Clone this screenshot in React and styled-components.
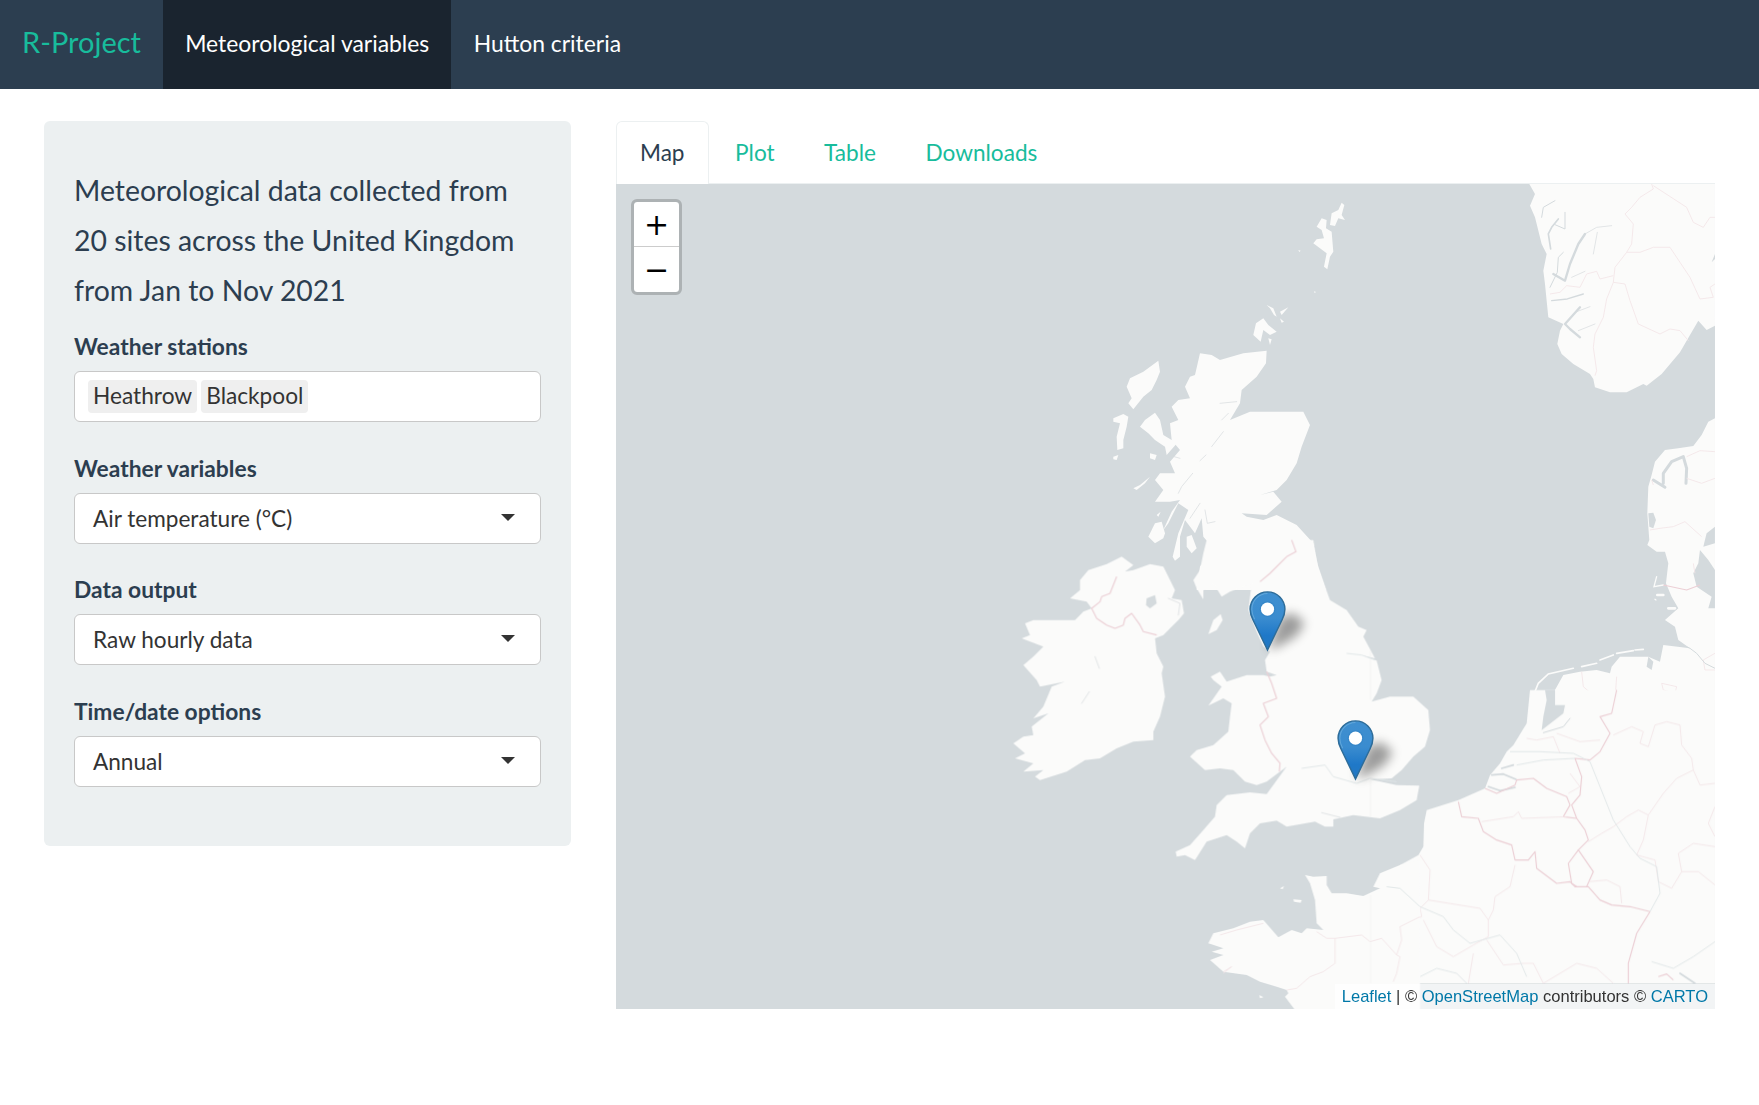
import React from "react";
import styled, { createGlobalStyle } from "styled-components";

const GlobalStyle = createGlobalStyle`
  html, body {
    margin: 0;
    padding: 0;
    background: #fff;
    font-family: Lato, "Open Sans", sans-serif;
    font-size: 22.8px;
    color: #2c3e50;
  }
  * { box-sizing: border-box; }
`;

const Navbar = styled.nav`
  display: flex;
  height: 89px;
  background: #2c3e50;
`;

const Brand = styled.a`
  width: 163px;
  padding-left: 22px;
  font-size: 29px;
  line-height: 84px;
  color: #18bc9c;
`;

const NavLink = styled.a`
  padding: 0 22.2px;
  font-size: 22.9px;
  line-height: 87px;
  color: #fff;
  background: ${(p) => (p.$active ? "#1a242f" : "transparent")};
`;

const Content = styled.div`
  display: flex;
  gap: 45px;
  padding: 32px 44px 0;
`;

const Sidebar = styled.aside`
  flex: none;
  width: 527px;
  height: 725px;
  padding: 44px 30px 0;
  background: #ecf0f1;
  border-radius: 6px;
`;

const Intro = styled.h4`
  margin: 0 0 16px;
  font-size: 28.4px;
  font-weight: 400;
  line-height: 50px;
  color: #2c3e50;
`;

const Field = styled.div`
  margin-bottom: 30.5px;
`;

const Label = styled.label`
  display: block;
  height: 40px;
  font-weight: 700;
  line-height: 30px;
  color: #2c3e50;
`;

const Control = styled.div`
  position: relative;
  display: flex;
  align-items: center;
  gap: 4px;
  width: 467px;
  height: 51px;
  padding: 0 ${(p) => (p.$multi ? "13px" : "18px")};
  background: #fff;
  border: 1px solid #c8c8c8;
  border-radius: 6px;
  font-size: 22.6px;
  color: #333;
  line-height: 29px;
`;

const Caret = styled.span`
  position: absolute;
  right: 25px;
  top: 20px;
  border-style: solid;
  border-width: 7px 7px 0;
  border-color: #333 transparent transparent;
`;

const Chip = styled.span`
  height: 33px;
  padding: 0 5px;
  background: #efefef;
  border-radius: 4px;
  font-size: 22.7px;
  color: #333;
  line-height: 32px;
`;

const Main = styled.main`
  flex: none;
  width: 1099px;
`;

const Tabs = styled.ul`
  display: flex;
  gap: 3.5px;
  height: 63px;
  margin: 0;
  padding: 0;
  list-style: none;
  border-bottom: 1px solid #ecf0f1;
`;

const Tab = styled.li`
  height: ${(p) => (p.$active ? "63px" : "62px")};
  padding: 0 ${(p) => (p.$active ? "23px" : "22px")};
  font-size: 22.6px;
  line-height: 62px;
  color: ${(p) => (p.$active ? "#2c3e50" : "#18bc9c")};
  background: #fff;
  border: 1px solid ${(p) => (p.$active ? "#ecf0f1" : "transparent")};
  border-bottom: 0;
  border-radius: 6px 6px 0 0;
`;

const MapBox = styled.div`
  position: relative;
  height: 825px;
  overflow: hidden;
  background: #d4dadd;
`;

const MapArt = styled.svg`
  display: block;
`;

const Land = styled.path`
  fill: #fbfbfa;
`;

const Water = styled.path`
  fill: #d4dadd;
`;

const Inlet = styled.path`
  fill: none;
  stroke: #d4dadd;
  stroke-width: ${(p) => p.$w || 4}px;
  stroke-linecap: round;
  stroke-linejoin: round;
`;

const Islet = styled.path`
  fill: none;
  stroke: #fbfbfa;
  stroke-width: ${(p) => p.$w || 4}px;
  stroke-linecap: round;
`;

const Border = styled.path`
  fill: none;
  stroke: ${(p) => (p.$strong ? "#eccfd5" : "#f3e6e8")};
  stroke-width: ${(p) => (p.$strong ? 3.4 : 2.6)}px;
  stroke-linejoin: round;
`;

const River = styled.path`
  fill: none;
  stroke: #dfe5e7;
  stroke-width: 2.6px;
`;

const Seam = styled.path`
  fill: none;
  stroke: #eeeeec;
  stroke-width: 1px;
`;

const Zoom = styled.div`
  position: absolute;
  left: 15px;
  top: 15px;
  width: 51px;
  height: 96px;
  background: #fff;
  border: 3px solid #adb2b4;
  border-radius: 6px;
  background-clip: padding-box;
`;

const ZoomButton = styled.div`
  height: 45px;
  border-bottom: ${(p) => (p.$first ? "1px solid #ccc" : "0")};
  font-family: "DejaVu Sans", sans-serif;
  font-weight: 400;
  font-size: 30px;
  line-height: 45px;
  text-align: center;
  color: #000;
`;

const Pin = styled.svg`
  position: absolute;
  left: ${(p) => p.$x}px;
  top: ${(p) => p.$y}px;
  overflow: visible;
`;

const Attribution = styled.div`
  position: absolute;
  right: 0;
  bottom: 0;
  height: 25px;
  padding: 0 7px;
  background: rgba(255, 255, 255, 0.7);
  font-family: "Liberation Sans", Arial, sans-serif;
  font-size: 16.55px;
  line-height: 25px;
  color: #333;
`;

const AttrLink = styled.a`
  color: #0078a8;
`;

// everything inside a Crop is written in the 3x coordinates of that zoomed crop
const Crop = ({ x, y, children }) => (
  <g transform={`translate(${x} ${y}) scale(0.3333)`}>{children}</g>
);

function MapTiles() {
  return (
    <MapArt width="1099" height="825" viewBox="616 184 1099 825">
      <defs>
        <filter id="soft" x="-2%" y="-2%" width="104%" height="104%">
          <feGaussianBlur stdDeviation="0.45" />
        </filter>
      </defs>
      <g filter="url(#soft)">
        {/* Scotland and islands */}
        <Crop x={1100} y={190}>
          <Land d="M300,490 L335,495 L360,510 L430,490 L500,482 L498,520 L470,560 L425,600 L420,640 L390,690 L450,665 L610,665 L630,705 L605,770 L590,820 L560,870 L530,900 L480,915 L520,905 L545,935 L500,975 L425,970 L440,980 L490,990 L530,975 L590,1005 L640,1060 L655,1130 L678,1200 L290,1200 L300,1130 L340,1075 L310,1040 L305,985 L285,1030 L255,990 L240,1040 L240,1100 L225,1112 L218,1100 L235,1030 L265,960 L235,940 L205,1000 L190,1020 L215,965 L240,930 L210,935 L165,935 L190,900 L165,870 L180,850 L225,850 L210,815 L240,780 L215,750 L210,700 L235,690 L215,650 L235,630 L270,625 L255,590 L270,560 L285,555 Z" />
          <Inlet $w={2} d="M370,725 L335,770 M318,795 L300,812 M215,798 L240,805 M278,850 L245,890 L235,910 M300,940 L270,985 M315,960 L322,1000 L345,995 M360,640 L410,635 M365,690 L385,670" />
          <Land d="M175,512 L180,545 L170,570 L155,600 L130,620 L100,658 L85,640 L95,625 L80,590 L90,565 L130,545 Z" />
          <Land d="M40,685 L70,672 L85,680 L80,710 L70,750 L70,775 L52,780 L50,740 L60,700 L40,695 Z" />
          <Land d="M40,800 L55,795 L50,810 L40,808 Z" />
          <Land d="M120,710 L135,690 L165,668 L180,690 L190,735 L215,750 L235,755 L200,795 L195,770 L165,750 L145,730 Z" />
          <Land d="M145,1040 L165,1000 L185,995 L195,1030 L190,1045 L165,1060 Z" />
          <Land d="M260,1040 L275,1035 L290,1075 L275,1090 L260,1070 Z" />
          <Land d="M100,895 L120,885 L150,860 L135,880 L110,900 Z" />
          <Land d="M150,790 L170,795 L165,810 L150,805 Z" />
          <Land d="M170,975 L182,965 L175,980 Z" />
          <Land d="M468,400 L490,385 L505,405 L530,425 L510,435 L490,420 L482,455 L460,435 Z" />
          <Land d="M500,345 L520,355 L530,380 L522,375 L510,355 Z" />
          <Land d="M540,365 L565,352 L545,375 Z" />
          <Land d="M540,385 L552,395 L545,398 Z" />
          <Land d="M505,445 L515,448 L510,465 Z" />
          <Land d="M725,38 L733,45 L725,75 L735,90 L715,85 L705,108 L690,105 L695,70 L715,60 Z" />
          <Land d="M665,85 L680,90 L678,115 L695,125 L700,185 L690,200 L682,238 L672,230 L680,190 L660,175 L640,160 L650,148 L672,145 L665,120 L650,110 Z" />
          <Land d="M595,180 L602,182 L598,186 Z" />
          <Land d="M642,304 L648,306 L644,309 Z" />
        </Crop>

        {/* England, Wales, Ireland */}
        <Crop x={1000} y={540}>
          <Land d="M620,0 L940,0 L950,70 L990,180 L1040,210 L1075,260 L1100,270 L1090,290 L1125,355 L1085,345 L1130,362 L1145,420 L1130,460 L1115,485 L1170,470 L1240,470 L1285,510 L1290,570 L1275,620 L1240,650 L1205,690 L1175,715 L1110,718 L1190,735 L1258,737 L1250,780 L1200,810 L1140,835 L1060,825 L1000,838 L1000,860 L975,860 L945,845 L860,860 L830,842 L780,850 L750,880 L735,925 L710,905 L680,885 L620,905 L585,960 L555,945 L530,950 L527,935 L570,915 L610,870 L645,830 L650,795 L680,765 L750,757 L800,762 L860,680 L800,725 L770,735 L735,725 L700,690 L660,685 L615,690 L570,650 L590,630 L640,615 L685,575 L690,530 L695,490 L670,475 L625,497 L665,440 L640,420 L632,410 L660,395 L680,425 L740,405 L790,405 L810,410 L830,405 L800,395 L795,360 L810,335 L790,320 L770,275 L745,210 L755,130 L690,155 L665,170 L640,130 L610,150 L610,178 L590,145 L580,120 L600,90 L610,40 Z" />
          <Inlet $w={2} d="M965,818 L1020,832" />
          <Land d="M625,282 L640,240 L662,222 L668,240 L650,270 Z" />
          <Land d="M240,120 L265,90 L320,72 L365,50 L400,75 L375,95 L400,90 L450,72 L490,80 L525,150 L515,175 L545,180 L552,220 L535,240 L510,265 L490,285 L465,295 L470,340 L490,380 L485,400 L495,470 L480,530 L460,575 L460,600 L400,605 L350,625 L300,655 L255,660 L200,695 L120,720 L105,710 L130,690 L70,695 L100,670 L45,655 L75,640 L40,610 L70,590 L100,585 L95,560 L145,520 L100,535 L130,500 L155,440 L195,425 L120,440 L110,420 L70,375 L100,350 L130,320 L65,295 L90,285 L75,250 L100,240 L225,240 L250,215 L275,205 L260,185 L210,175 L240,150 Z" />
          <Water d="M440,175 L465,165 L470,190 L450,205 L438,195 Z" />
          <Inlet $w={2} d="M285,350 L298,385 M268,455 L245,490 M505,175 L540,190 L535,225" />
          <Border $strong d="M350,110 L330,160 L305,170 L300,185 L275,205 L290,235 L320,255 L345,265 L370,255 L375,235 L395,220 L420,255 L430,275 L470,285" />
          <Border $strong d="M875,0 L888,35 L860,50 L810,100 L780,125" />
          <Border $strong d="M800,395 L815,430 L830,475 L790,490 L805,530 L780,555 L795,600 L815,640 L840,670 L838,695" />
          <River d="M905,685 L975,675 L1000,710 L1070,730 L1110,715 L1190,725 M1040,340 L1085,345 L1125,360" />
          <Seam d="M1112,330 L1112,480 M1112,720 L1112,830" strokeWidth="3" />
        </Crop>

        {/* Norway */}
        <Crop x={1480} y={184}>
          <Land d="M148,0 L705,0 L705,210 L695,235 L705,225 L705,425 L680,438 L655,410 L620,470 L600,505 L545,570 L500,605 L490,600 L440,625 L390,625 L345,610 L340,585 L330,570 L280,540 L245,510 L232,480 L240,440 L250,420 L205,400 L200,350 L195,300 L190,260 L200,210 L185,180 L165,100 L150,65 L165,30 Z" />
          <Inlet $w={7} d="M315,150 L295,180 L270,240 L255,290 L220,270" />
          <Inlet $w={2} d="M395,125 L350,130 L315,150 M340,210 L352,145 M315,262 L275,280" />
          <Inlet $w={5} d="M235,105 L215,130 L205,150 L212,195" />
          <Inlet $w={3} d="M225,50 L190,70 L185,100 M255,85 L255,135 L225,122 M250,205 L235,220 L232,265 L210,310" />
          <Inlet $w={4} d="M310,330 L262,345 L215,350" />
          <Inlet $w={7} d="M300,370 L255,420 L270,435 L300,460" />
          <Inlet $w={2} d="M345,420 L295,440 M330,368 L285,385" />
          <Border d="M515,0 L520,15 L480,40 L455,70 L435,90 L460,120 L455,180 L440,205 L405,250 L400,295 L380,345 L370,400 L345,450 L340,490 L350,560 L345,575" />
          <Border d="M400,295 L435,300 L450,350 L475,420 L540,450 L570,435 L600,440 L625,470 M440,205 L480,205 L520,190 L570,190 L600,235 L630,280 L660,345 L700,340 L690,310 L705,300 M520,5 L620,70 L640,115 L670,130 L690,100 L705,100 M400,275 L360,285 L350,262 L320,270 L300,310 L260,305 L240,325 L210,330" />
        </Crop>

        {/* Denmark, north Germany */}
        <Crop x={1400} y={400}>
          <Land d="M945,55 L925,65 L905,105 L880,138 L835,145 L795,150 L765,185 L755,225 L745,260 L742,340 L748,420 L742,435 L770,455 L795,455 L805,490 L798,550 L815,590 L835,625 L795,660 L825,680 L835,720 L870,745 L790,735 L780,785 L745,770 L660,770 L635,800 L630,820 L590,810 L540,815 L490,825 L465,870 L465,900 L945,900 Z" />
          <Inlet $w={9} d="M760,240 L795,262 M790,250 L790,220 L815,185 L850,170 L860,205 L858,250" />
          <Water d="M745,340 L760,338 L768,360 L760,385 L748,380 Z" />
          <Water d="M945,380 L920,400 L910,440 L945,430 Z" />
          <Water d="M900,450 L925,480 L945,510 L945,625 L925,625 L935,590 L890,560 L880,520 L895,490 Z" />
          <Water d="M745,770 L760,785 L755,810 L740,800 Z" />
          <Islet $w={4} d="M770,530 L762,560 L790,555 M765,598 L768,600" />
          <Islet $w={8} d="M772,585 L790,585 M805,625 L825,625" />
          <Islet $w={5} d="M403,880 L415,850 L445,822 L520,805 M545,800 L590,790 M600,780 L640,765 M650,760 L700,752 M705,750 L730,748" />
          <Border $strong d="M790,555 L860,570 L900,555" />
          <Border d="M860,170 L900,152 L945,155 M750,390 L780,385 L820,380 L855,365 L905,410 M755,240 L760,255 M860,235 L905,250 L945,235 M545,815 L550,860 L590,895 M650,830 L645,900 M785,850 L830,860 L825,880 L790,870 Z M945,760 L910,780 L915,810 L945,810 M880,490 L885,520" />
          <Inlet $w={3} d="M835,730 L870,745 L890,760 L915,790 L945,805" />
        </Crop>

        {/* Low countries, France, Germany */}
        <Crop x={1400} y={690}>
          <Land d="M390,0 L945,0 L945,880 L0,880 L0,525 L55,495 L70,470 L72,400 L80,360 L175,330 L255,295 L270,255 L300,220 L320,185 L340,165 L380,100 Z" />
          <Water d="M465,0 L435,0 L440,30 L430,80 L425,120 L490,70 L495,45 L465,45 Z" />
          <Inlet $w={5} d="M348,268 L310,252 L275,255 M345,292 L300,302 L265,290 M340,225 L305,235" />
          <Inlet $w={3} d="M430,128 L490,110 L510,85" />
          <Border $strong d="M175,335 L185,380 L235,385 L250,425 L290,450 L335,465 L345,510 L385,510 L405,485 L410,535 L470,580 L510,575 L525,590 L565,590 L600,630 L635,645 L690,650 L750,665" />
          <Border $strong d="M255,295 L290,310 L345,285 L350,270 L400,265 L440,295 L500,320 L510,345 L490,380 L530,385 L555,420 L565,450 L535,480 L580,545 L560,590" />
          <Border $strong d="M650,0 L635,70 L600,80 L630,130 L600,185 L570,210 L525,205 L545,260 L540,315 L515,345 L530,385" />
          <Border $strong d="M535,480 L505,520 L515,580 L530,590 M750,665 L710,730 L685,820 L685,880 M775,860 L800,852 L820,870" />
          <Border d="M640,135 L695,110 L730,125 L720,160 L745,170 L765,105 L800,95 L840,105 L845,165 L875,205 L880,240 L900,285 L945,280 M880,240 L830,265 L790,310 L745,375 L715,360 L680,380 L640,410 L605,430 L565,455 M745,375 L730,450 L710,495 L765,510 L775,575 L815,595 L845,545 L895,545 L945,585 M835,490 L845,545 M835,490 L880,460 L945,470 M565,575 L620,570 L660,590 L665,640 M245,395 L340,380 L355,365 L365,385 L500,380 M60,495 L90,540 L85,630 L60,655 L65,680 L0,710 M85,630 L240,655 L265,690 L265,740 L220,765 L160,800 L110,770 L70,690 M345,525 L330,590 L285,620 L280,660 L265,690 M260,750 L310,825 L370,820 L400,820 L430,880 M430,880 L530,820 L590,835 L640,880 M220,790 L205,880 M380,145 L410,150 L460,140 L480,190 M470,130 L540,155 L600,150 M510,250 L540,290 L505,310 M945,350 L925,400 L945,440" />
          <River d="M330,185 L420,185 L520,190 L570,215 L600,290 L640,390 L690,470 L720,505 L770,530 L780,610 L750,665 M350,225 L430,210 L525,205 M0,600 L60,650 L130,680 L160,720 L210,760 L300,735 L350,790 L380,860 M755,815 L820,835 L880,800 L945,755 M60,860 L110,835 L170,850 L200,880" />
          <Inlet $w={5} d="M840,850 L885,880" />
        </Crop>

        {/* Normandy, Brittany */}
        <Crop x={1180} y={860}>
          <Land d="M720,0 L660,15 L600,40 L580,80 L600,85 L550,108 L500,100 L455,100 L440,75 L440,48 L400,50 L375,45 L390,70 L405,120 L410,190 L430,210 L380,205 L365,220 L335,210 L295,232 L250,180 L210,185 L160,205 L100,220 L85,250 L130,265 L95,275 L130,285 L90,300 L130,335 L200,345 L240,365 L290,380 L320,390 L325,400 L315,410 L345,450 L720,450 Z" />
          <Land d="M340,118 L365,120 L362,128 L342,125 Z" />
          <Land d="M300,85 L312,78 L308,88 Z" />
          <Land d="M238,405 L250,412 L240,415 Z" />
          <Border d="M410,215 L440,235 L465,235 L465,310 L430,335 L390,350 L350,385 L320,390 M465,235 L545,225 L570,245 L605,235 L650,285 L660,290 L650,340 L640,365 M720,170 L660,200 L665,240 L650,285 M120,225 L170,210 L250,190 M130,335 L155,320 L130,340" />
          <River d="M620,80 L660,85 L720,140" />
          <Seam d="M572,105 L572,370" strokeWidth="3" />
        </Crop>
      </g>
    </MapArt>
  );
}

function MapPin({ x, y, id }) {
  return (
    <Pin $x={x} $y={y} width="37" height="60" viewBox="0 0 25 41">
      <defs>
        <linearGradient id={`pin${id}`} x1="0" y1="0" x2="0" y2="1">
          <stop offset="0" stopColor="#3f8fd0" />
          <stop offset="0.45" stopColor="#3a8ccf" />
          <stop offset="0.75" stopColor="#1f78c8" />
          <stop offset="1" stopColor="#2278c2" />
        </linearGradient>
        <filter id={`pinShadow${id}`} x="-100%" y="-100%" width="300%" height="300%">
          <feGaussianBlur stdDeviation="3.6" />
        </filter>
      </defs>
      <path
        d="M13,40 L20,38 L32,31 L38,22 L30,15 L21,18 Z"
        fill="#000"
        opacity="0.38"
        filter={`url(#pinShadow${id})`}
      />
      <path
        d="M12.5,.6 C5.9,.6 .6,5.9 .6,12.5 C.6,14.9 1.4,17.4 2.6,19.8 L12.5,40.4 L22.4,19.8 C23.6,17.4 24.4,14.9 24.4,12.5 C24.4,5.9 19.1,.6 12.5,.6 Z"
        fill={`url(#pin${id})`}
        stroke="#2d6c99"
        strokeWidth="1"
      />
      <path
        d="M12.5,1.7 C6.6,1.7 1.8,6.6 1.8,12.5 C1.8,14.6 2.5,17 3.7,19.3"
        fill="none"
        stroke="#6fb0de"
        strokeWidth="0.7"
        opacity="0.7"
      />
      <circle cx="12.5" cy="12.4" r="5.4" fill="#2f7fbe" opacity="0.45" />
      <circle cx="12.5" cy="12.4" r="4.5" fill="#fff" />
    </Pin>
  );
}

const fields = [
  { label: "Weather variables", value: "Air temperature (°C)" },
  { label: "Data output", value: "Raw hourly data" },
  { label: "Time/date options", value: "Annual" },
];

export default function App() {
  return (
    <>
      <GlobalStyle />
      <Navbar>
        <Brand>R-Project</Brand>
        <NavLink $active>Meteorological variables</NavLink>
        <NavLink>Hutton criteria</NavLink>
      </Navbar>
      <Content>
        <Sidebar>
          <Intro>
            Meteorological data collected from
            <br />
            20 sites across the United Kingdom
            <br />
            from Jan to Nov 2021
          </Intro>
          <Field>
            <Label>Weather stations</Label>
            <Control $multi>
              <Chip>Heathrow</Chip>
              <Chip>Blackpool</Chip>
            </Control>
          </Field>
          {fields.map((f) => (
            <Field key={f.label}>
              <Label>{f.label}</Label>
              <Control>
                {f.value}
                <Caret />
              </Control>
            </Field>
          ))}
        </Sidebar>
        <Main>
          <Tabs>
            <Tab $active>Map</Tab>
            <Tab>Plot</Tab>
            <Tab>Table</Tab>
            <Tab>Downloads</Tab>
          </Tabs>
          <MapBox>
            <MapTiles />
            <Zoom>
              <ZoomButton $first>+</ZoomButton>
              <ZoomButton>−</ZoomButton>
            </Zoom>
            <MapPin id="a" x={633} y={407} />
            <MapPin id="b" x={721} y={536} />
            <Attribution>
              <AttrLink>Leaflet</AttrLink> | © <AttrLink>OpenStreetMap</AttrLink> contributors ©{" "}
              <AttrLink>CARTO</AttrLink>
            </Attribution>
          </MapBox>
        </Main>
      </Content>
    </>
  );
}
